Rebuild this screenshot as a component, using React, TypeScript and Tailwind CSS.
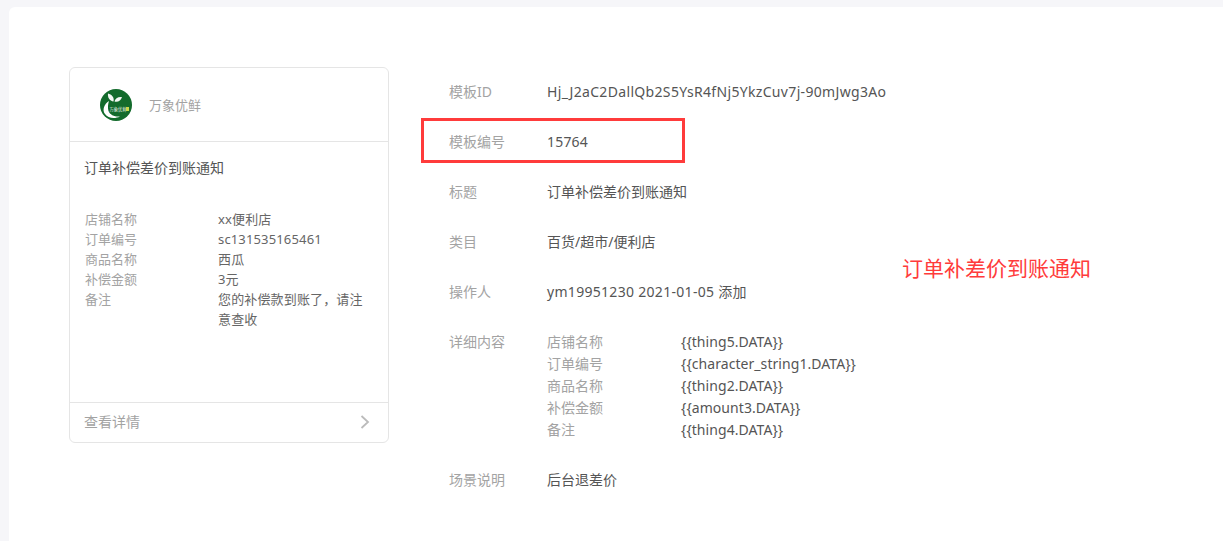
const FONT = 'font-["Noto_Sans","Noto_Sans_CJK_SC",sans-serif]';

const PREVIEW_FIELDS = [
  { label: '店铺名称', value: 'xx便利店' },
  { label: '订单编号', value: 'sc131535165461' },
  { label: '商品名称', value: '西瓜' },
  { label: '补偿金额', value: '3元' },
  { label: '备注', value: '您的补偿款到账了，请注意查收' },
];

const DETAILS = [
  { label: '店铺名称', value: '{{thing5.DATA}}' },
  { label: '订单编号', value: '{{character_string1.DATA}}' },
  { label: '商品名称', value: '{{thing2.DATA}}' },
  { label: '补偿金额', value: '{{amount3.DATA}}' },
  { label: '备注', value: '{{thing4.DATA}}' },
];

function Logo() {
  return (
    <svg width="32" height="32" viewBox="0 0 32 32" aria-hidden="true">
      <circle cx="16" cy="16" r="16" fill="#136b2c" />
      <path d="M9 12C4 15 2 21 5 25c3 4.500 10 5 15 2.500-5 .5-10-1.500-11.500-5.500C7.500 18.500 8 15 9 12z" fill="#fff" />
      <path d="M13.500 12.500C9.500 12 7.500 8.500 8 4.500c3.500 1 6.500 3.500 5.500 8z" fill="#f4f8f4" />
      <path d="M14.500 12.500c.5-3 3.500-5 7.500-4.500-1 3.500-4 5.500-7.500 4.500z" fill="#f4f8f4" />
      <rect x="9" y="17" width="20" height="6" fill="#136b2c" />
      <text x="9.500" y="22" fontSize="4.300" fill="#e6f1e8">万象优鲜</text>
      <rect x="26" y="18" width="3" height="4" fill="#c8d84a" />
    </svg>
  );
}

function Row({ label, children }: { label: string; children: React.ReactNode }) {
  return (
    <div className="flex h-[50px] items-center text-sm">
      <div className="w-[98px] shrink-0 text-[#a3a3a3]">{label}</div>
      <div className="text-[#555]">{children}</div>
    </div>
  );
}

export default function App() {
  return (
    <div className={`min-h-screen bg-[#f6f6f9] pl-[9px] pt-[7px] ${FONT}`}>
      <div className="relative flex h-[534px] gap-[60px] overflow-hidden rounded-tl-md bg-white pl-[60px] pt-[60px]">
        <div className="flex h-[376px] w-[320px] shrink-0 flex-col rounded-md border border-[#e5e5e5]">
          <div className="flex h-[74px] shrink-0 items-center gap-[17px] border-b border-[#e5e5e5] pl-[30px]">
            <Logo />
            <span className="translate-y-px text-[13px] text-[#a3a3a3]">万象优鲜</span>
          </div>
          <div className="flex-1 px-[14px] pt-4">
            <div className="text-sm leading-5 text-[#555]">订单补偿差价到账通知</div>
            <div className="ml-px mt-[31px] flex flex-col text-[13px] leading-5">
              {PREVIEW_FIELDS.map(f => (
                <div key={f.label} className="flex">
                  <div className="w-[133px] shrink-0 text-[#a3a3a3]">{f.label}</div>
                  <div className="w-[150px] tracking-[0.15px] text-[#666]">{f.value}</div>
                </div>
              ))}
            </div>
          </div>
          <div className="flex h-10 shrink-0 items-center justify-between border-t border-[#e5e5e5] pb-0.5 pl-[14px] pr-[18px]">
            <span className="text-sm text-[#a3a3a3]">查看详情</span>
            <svg width="10" height="14" viewBox="0 0 10 14" fill="none" stroke="#bbb" strokeWidth="1.800" aria-hidden="true">
              <path d="M1.500 1l6.500 6-6.500 6" />
            </svg>
          </div>
        </div>

        <div className="flex flex-col">
          <Row label="模板ID"><span className="tracking-[0.33px]">Hj_J2aC2DallQb2S5YsR4fNj5YkzCuv7j-90mJwg3Ao</span></Row>
          <Row label="模板编号"><span className="tracking-[0.2px]">15764</span></Row>
          <Row label="标题">订单补偿差价到账通知</Row>
          <Row label="类目">百货/超市/便利店</Row>
          <Row label="操作人"><span className="tracking-[0.3px]">ym19951230 2021-01-05 添加</span></Row>
          <div className="mt-[14px] flex text-sm leading-[22px]">
            <div className="w-[98px] shrink-0 text-[#a3a3a3]">详细内容</div>
            <div className="flex flex-col">
              {DETAILS.map(d => (
                <div key={d.label} className="flex">
                  <div className="w-[134px] shrink-0 text-[#a3a3a3]">{d.label}</div>
                  <div className="tracking-[0.06px] text-[#555]">{d.value}</div>
                </div>
              ))}
            </div>
          </div>
          <div className="mt-[14px]">
            <Row label="场景说明">后台退差价</Row>
          </div>
        </div>

        <div className="absolute left-[412px] top-[111px] h-[45px] w-[264px] border-[3px] border-[#ff3b3b]" />
        <div className="absolute left-[893px] top-[247px] text-[21px] leading-7 text-[#ff3b3b]">订单补差价到账通知</div>
      </div>
    </div>
  );
}
